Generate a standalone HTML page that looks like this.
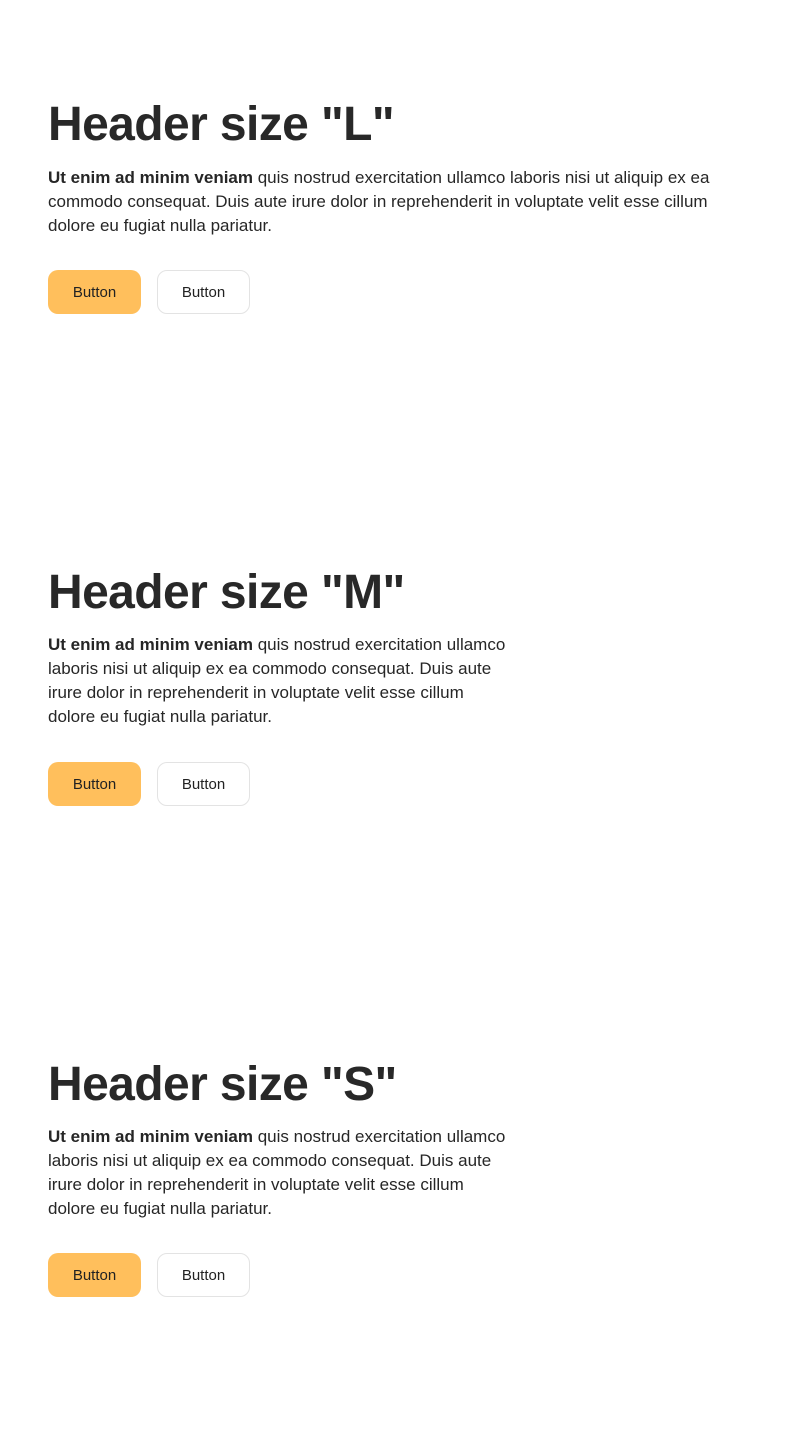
<!DOCTYPE html>
<html><head><meta charset="utf-8"><style>
*{margin:0;padding:0;box-sizing:border-box}
body{width:800px;height:1450px;background:#fff;font-family:"Liberation Sans",Arial,sans-serif;color:#262626;position:relative;overflow:hidden}
h1{position:absolute;left:48px;font-size:48px;line-height:56px;font-weight:700;letter-spacing:-0.6px;color:#282828}
p{position:absolute;left:48px;font-size:17px;line-height:24px;color:#262626;white-space:nowrap}
b{font-weight:700}
.btns{position:absolute;left:48px;display:flex;gap:16px}
.btn{width:93px;height:44px;border-radius:10px;font-size:15px;display:flex;align-items:center;justify-content:center;color:#222}
.p{background:#ffbf5c}
.s{background:#fff;border:1px solid #e3e3e3}
</style></head><body>
<h1 style="top:97px">Header size "L"</h1>
<p style="top:166px"><b>Ut enim ad minim veniam</b> quis nostrud exercitation ullamco laboris nisi ut aliquip ex ea<br>commodo consequat. Duis aute irure dolor in reprehenderit in voluptate velit esse cillum<br>dolore eu fugiat nulla pariatur.</p>
<div class="btns" style="top:270px"><div class="btn p">Button</div><div class="btn s">Button</div></div>

<h1 style="top:565px">Header size "M"</h1>
<p style="top:633px"><b>Ut enim ad minim veniam</b> quis nostrud exercitation ullamco<br>laboris nisi ut aliquip ex ea commodo consequat. Duis aute<br>irure dolor in reprehenderit in voluptate velit esse cillum<br>dolore eu fugiat nulla pariatur.</p>
<div class="btns" style="top:762px"><div class="btn p">Button</div><div class="btn s">Button</div></div>

<h1 style="top:1057px">Header size "S"</h1>
<p style="top:1125px"><b>Ut enim ad minim veniam</b> quis nostrud exercitation ullamco<br>laboris nisi ut aliquip ex ea commodo consequat. Duis aute<br>irure dolor in reprehenderit in voluptate velit esse cillum<br>dolore eu fugiat nulla pariatur.</p>
<div class="btns" style="top:1253px"><div class="btn p">Button</div><div class="btn s">Button</div></div>
</body></html>
